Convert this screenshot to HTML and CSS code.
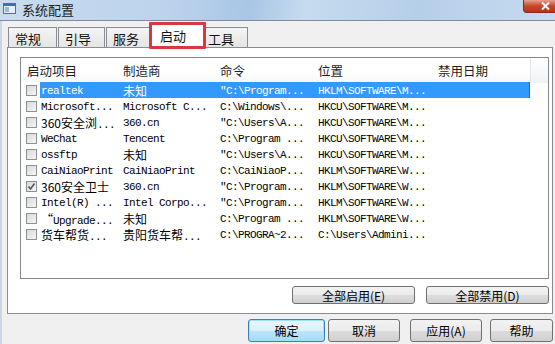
FILE: index.html
```html
<!DOCTYPE html>
<html>
<head>
<meta charset="utf-8">
<link rel="stylesheet" href="styles.css">
</head>
<body>
<div class="win">
  <div class="titlebar">
    <svg class="appicon" width="13" height="12" viewBox="0 0 13 12">
      <rect x="0.5" y="0.5" width="12" height="10" fill="#e8eef6" stroke="#5a6e88"/>
      <rect x="1" y="1" width="11" height="2" fill="#3a6fb4"/>
      <rect x="2" y="4" width="4" height="5" fill="#9fb6d4"/>
    </svg>
    <span class="title">系统配置</span>
    <span class="spacer"></span>
    <span class="close"><svg width="9" height="8" viewBox="0 0 9 8"><path d="M1 0.5 L8 7.5 M8 0.5 L1 7.5" stroke="#fff" stroke-width="2"/></svg></span>
  </div>
  <div class="body">
    <div class="tabs">
      <div class="tab t1">常规</div>
      <div class="tab t2">引导</div>
      <div class="tab t3">服务</div>
      <div class="tab sel">启动<span class="mark"></span></div>
      <div class="tab t5">工具</div>
    </div>
    <div class="panel">
      <div class="list">
        <div class="head">
          <div class="h hc1">启动项目</div>
          <div class="h">制造商</div>
          <div class="h">命令</div>
          <div class="h">位置</div>
          <div class="h">禁用日期</div>
          <div class="h hend"></div>
        </div>
        <div class="row on">
          <div class="cb"><span class="box"></span></div>
          <div class="cell">realtek</div>
          <div class="cell"><span class="c">未知</span></div>
          <div class="cell">"C:\Program...</div>
          <div class="cell">HKLM\SOFTWARE\M...</div>
          <div class="cell"></div>
        </div>
        <div class="row">
          <div class="cb"><span class="box"></span></div>
          <div class="cell">Microsoft...</div>
          <div class="cell">Microsoft C...</div>
          <div class="cell">C:\Windows\...</div>
          <div class="cell">HKCU\SOFTWARE\M...</div>
          <div class="cell"></div>
        </div>
        <div class="row">
          <div class="cb"><span class="box"></span></div>
          <div class="cell"><span class="c">360安全浏</span>...</div>
          <div class="cell">360.cn</div>
          <div class="cell">"C:\Users\A...</div>
          <div class="cell">HKCU\SOFTWARE\M...</div>
          <div class="cell"></div>
        </div>
        <div class="row">
          <div class="cb"><span class="box"></span></div>
          <div class="cell">WeChat</div>
          <div class="cell">Tencent</div>
          <div class="cell">C:\Program ...</div>
          <div class="cell">HKCU\SOFTWARE\M...</div>
          <div class="cell"></div>
        </div>
        <div class="row">
          <div class="cb"><span class="box"></span></div>
          <div class="cell">ossftp</div>
          <div class="cell"><span class="c">未知</span></div>
          <div class="cell">"C:\Users\A...</div>
          <div class="cell">HKCU\SOFTWARE\M...</div>
          <div class="cell"></div>
        </div>
        <div class="row">
          <div class="cb"><span class="box"></span></div>
          <div class="cell">CaiNiaoPrint</div>
          <div class="cell">CaiNiaoPrint</div>
          <div class="cell">C:\CaiNiaoP...</div>
          <div class="cell">HKLM\SOFTWARE\W...</div>
          <div class="cell"></div>
        </div>
        <div class="row">
          <div class="cb"><span class="box chk"><svg width="9" height="9" viewBox="0 0 9 9"><path d="M1.5 4.5 L3.5 7 L7.5 1.5" fill="none" stroke="#4a5a6a" stroke-width="1.6"/></svg></span></div>
          <div class="cell"><span class="c">360安全卫士</span></div>
          <div class="cell">360.cn</div>
          <div class="cell">"C:\Program...</div>
          <div class="cell">HKLM\SOFTWARE\W...</div>
          <div class="cell"></div>
        </div>
        <div class="row">
          <div class="cb"><span class="box"></span></div>
          <div class="cell">Intel(R) ...</div>
          <div class="cell">Intel Corpo...</div>
          <div class="cell">"C:\Program...</div>
          <div class="cell">HKLM\SOFTWARE\W...</div>
          <div class="cell"></div>
        </div>
        <div class="row">
          <div class="cb"><span class="box"></span></div>
          <div class="cell"><span class="c">“</span>Upgrade...</div>
          <div class="cell"><span class="c">未知</span></div>
          <div class="cell">C:\Program ...</div>
          <div class="cell">HKLM\SOFTWARE\W...</div>
          <div class="cell"></div>
        </div>
        <div class="row">
          <div class="cb"><span class="box"></span></div>
          <div class="cell"><span class="c">货车帮货</span>...</div>
          <div class="cell"><span class="c">贵阳货车帮</span>...</div>
          <div class="cell">C:\PROGRA~2...</div>
          <div class="cell">C:\Users\Admini...</div>
          <div class="cell"></div>
        </div>
      </div>
      <div class="panelbtns">
        <div class="btn wide">全部启用(E)</div>
        <div class="btn wide">全部禁用(D)</div>
      </div>
    </div>
    <div class="footer">
      <div class="btn ok">确定</div>
      <div class="btn b2">取消</div>
      <div class="btn b3">应用(A)</div>
      <div class="btn b4">帮助</div>
    </div>
  </div>
</div>
</body>
</html>
```
FILE: styles.css
```css
html, body {
  margin: 0;
  padding: 0;
}
body {
  width: 555px;
  height: 344px;
  overflow: hidden;
  background: #f0f0f0;
  font-family: "Noto Sans CJK SC", "Liberation Sans", sans-serif;
  font-size: 12px;
  color: #000;
}
.win {
  width: 555px;
  height: 344px;
  display: flex;
  flex-direction: column;
}
.titlebar {
  height: 21px;
  display: flex;
  align-items: flex-start;
  background: linear-gradient(100deg, #c9dcef 0%, #bcd3ec 30%, #a9c6e6 45%, #c6dbef 55%, #b6cfe9 75%, #c7dbf0 100%);
  border-bottom: 1px solid #7e8c9c;
  box-sizing: border-box;
}
.appicon {
  margin: 3px 0 0 3px;
  flex: none;
}
.title {
  margin-left: 6px;
  line-height: 20px;
  font-size: 13px;
  color: #1c1c1c;
}
.spacer { flex: 1; }
.close {
  width: 32px;
  height: 13px;
  flex: none;
  display: flex;
  align-items: center;
  justify-content: flex-end;
  padding-right: 5px;
  box-sizing: border-box;
  background: linear-gradient(#e8a08c, #c7472b 50%, #b8341c);
  border: 1px solid #8a2a1c;
  border-top: none;
  border-right: none;
  border-bottom-left-radius: 4px;
}
.body {
  flex: 1;
  display: flex;
  flex-direction: column;
  border-left: 2px solid #c8d6e6;
}
.tabs {
  height: 26px;
  display: flex;
  align-items: flex-end;
  padding-left: 6px;
  box-sizing: border-box;
  position: relative;
  z-index: 1;
}
.tab {
  height: 20px;
  box-sizing: border-box;
  border: 1px solid #898c95;
  border-bottom: none;
  margin-right: 1px;
  padding-left: 6px;
  line-height: 21px;
  font-size: 13px;
  background: linear-gradient(#f4f4f4, #e5e5e5);
  color: #111;
}
.t1 { width: 49px; }
.t2 { width: 47px; }
.t3 { width: 45px; margin-right: 0; }
.t5 { width: 42px; padding-left: 2px; border-left: none; }
.tab.sel {
  width: 55px;
  height: 25px;
  margin-bottom: -1px;
  margin-right: 0;
  padding-left: 8px;
  background: #fff;
  line-height: 23px;
  position: relative;
}
.mark {
  position: absolute;
  left: -3px;
  top: -2px;
  width: 57px;
  height: 27px;
  border: 3px solid #d9383c;
  box-sizing: border-box;
  border-radius: 1px;
}
.panel {
  margin-left: 5px;
  width: 546px;
  height: 267px;
  box-sizing: border-box;
  border: 1px solid #898c95;
  background: #fff;
  padding: 9px 0 9px 12px;
}
.list {
  width: 529px;
  height: 222px;
  box-sizing: border-box;
  border: 1px solid #828790;
  background: #fff;
}
.head {
  height: 24px;
  display: grid;
  grid-template-columns: 100px 97px 98px 120px 94px 1fr;
  align-items: center;
  background: linear-gradient(#fff, #fff 60%, #f6f7f9);
}
.h {
  padding-left: 2px;
  font-size: 12.5px;
  color: #1e1e1e;
  line-height: 25px;
}
.h.hc1 { padding-left: 6px; }
.hend {
  height: 24px;
  border-left: 1px solid #e3e6ea;
  background: linear-gradient(#fff, #f0f2f4);
}
.row {
  height: 16px;
  display: grid;
  grid-template-columns: 19px 81px 97px 98px 120px 94px;
  font-family: "Liberation Mono", "Noto Sans CJK SC", monospace;
  font-size: 11px;
  letter-spacing: -0.6px;
  line-height: 18px;
  color: #000;
  white-space: nowrap;
}
.cell {
  padding-left: 2px;
  height: 16px;
}
.row .cell:nth-child(2) { padding-left: 1px; }
.c {
  font-family: "Noto Sans CJK SC", sans-serif;
  font-size: 12px;
  letter-spacing: 0;
}
.row.on .cell {
  background: #3399ff;
  color: #fff;
}
.row.on .cell:last-child {
  border-right: 1px solid #1c6fc7;
}
.cb {
  display: flex;
  align-items: center;
  padding-left: 5px;
  padding-top: 1px;
}
.box {
  width: 11px;
  height: 11px;
  box-sizing: border-box;
  border: 1px solid #8e8f8f;
  background: linear-gradient(135deg, #d8d8d8, #f6f6f6);
  display: flex;
  align-items: center;
  justify-content: center;
}
.panelbtns {
  margin-top: 7px;
  display: flex;
  justify-content: flex-end;
  gap: 11px;
  width: 529px;
}
.btn {
  box-sizing: border-box;
  border: 1px solid #707070;
  border-radius: 3px;
  background: linear-gradient(#f2f2f2, #ebebeb 50%, #dddddd 51%, #cfcfcf);
  display: flex;
  align-items: center;
  justify-content: center;
  font-size: 12px;
  color: #000;
}
.btn.wide {
  width: 123px;
  height: 18px;
}
.footer {
  margin-top: 5px;
  display: flex;
  padding-left: 246px;
}
.footer .btn { height: 23px; }
.btn.ok {
  width: 77px;
  border-color: #3c7fb1;
  background: linear-gradient(#eaf6fd, #d9f0fc 50%, #bee6fd 51%, #a7d9f5);
  box-shadow: inset 0 0 0 1px #9fe0fb;
}
.btn.b2 { width: 72px; margin-left: 3px; }
.btn.b3 { width: 72px; margin-left: 10px; }
.btn.b4 { width: 63px; margin-left: 8px; }
```
